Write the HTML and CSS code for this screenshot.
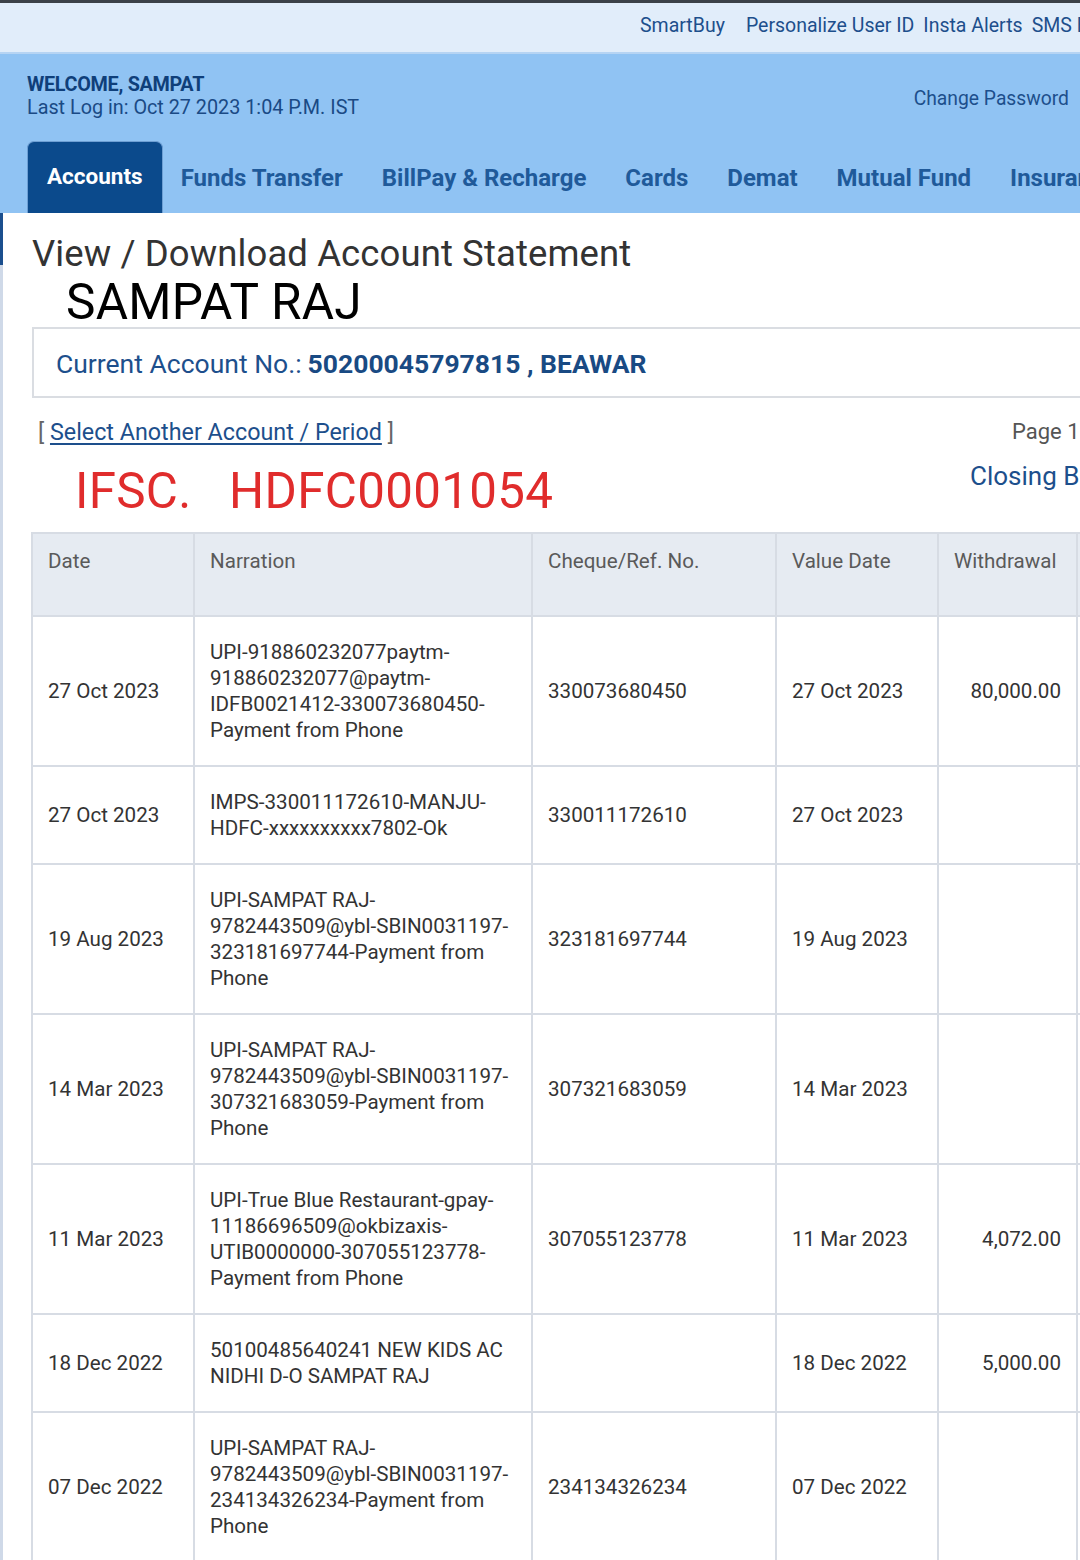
FILE: index.html
```html
<!DOCTYPE html>
<html>
<head>
<meta charset="utf-8">
<link rel="stylesheet" href="styles.css">
</head>
<body>
<div class="topstrip"></div>
<div class="utilbar">
  <a class="util">SmartBuy</a>
  <a class="util">Personalize User ID</a>
  <a class="util">Insta Alerts</a>
  <a class="util">SMS Banking</a>
</div>
<header class="header">
  <div class="welcome-row">
    <div class="welcome">
      <div class="welcome-name">WELCOME, SAMPAT</div>
      <div class="lastlog">Last Log in: Oct 27 2023 1:04 P.M. IST</div>
    </div>
    <a class="changepw">Change Password</a>
  </div>
  <nav class="tabs">
    <a class="tab active">Accounts</a>
    <a class="tab">Funds Transfer</a>
    <a class="tab">BillPay &amp; Recharge</a>
    <a class="tab">Cards</a>
    <a class="tab">Demat</a>
    <a class="tab">Mutual Fund</a>
    <a class="tab">Insurance</a>
  </nav>
</header>
<main class="content">
  <h1 class="title">View / Download Account Statement</h1>
  <div class="holder">SAMPAT RAJ</div>
  <div class="acctbox">
    <span class="acct-label">Current Account No.: </span><span class="acct-no">50200045797815 , BEAWAR</span>
  </div>
  <div class="meta-row">
    <div class="meta-left">
      <div class="select"><span class="bracket">[ </span><a class="select-link">Select Another Account / Period</a><span class="bracket"> ]</span></div>
      <div class="ifsc">IFSC.&nbsp;&nbsp;&nbsp;HDFC0001054</div>
    </div>
    <div class="meta-right">
      <div class="page">Page 1 of 1</div>
      <div class="closing">Closing Balance</div>
    </div>
  </div>
  <table class="stmt">
    <colgroup>
      <col class="c-date"><col class="c-narr"><col class="c-ref"><col class="c-vdate"><col class="c-wd"><col class="c-dep"><col class="c-bal">
    </colgroup>
    <thead>
      <tr><th>Date</th><th>Narration</th><th>Cheque/Ref. No.</th><th>Value Date</th><th>Withdrawal</th><th>Deposit</th><th>Closing Balance</th></tr>
    </thead>
    <tbody>
      <tr><td>27 Oct 2023</td><td>UPI-918860232077paytm-<br>918860232077@paytm-<br>IDFB0021412-330073680450-<br>Payment from Phone</td><td>330073680450</td><td>27 Oct 2023</td><td class="num">80,000.00</td><td class="num"></td><td class="num"></td></tr>
      <tr><td>27 Oct 2023</td><td>IMPS-330011172610-MANJU-<br>HDFC-xxxxxxxxxx7802-Ok</td><td>330011172610</td><td>27 Oct 2023</td><td class="num"></td><td class="num"></td><td class="num"></td></tr>
      <tr><td>19 Aug 2023</td><td>UPI-SAMPAT RAJ-<br>9782443509@ybl-SBIN0031197-<br>323181697744-Payment from<br>Phone</td><td>323181697744</td><td>19 Aug 2023</td><td class="num"></td><td class="num"></td><td class="num"></td></tr>
      <tr><td>14 Mar 2023</td><td>UPI-SAMPAT RAJ-<br>9782443509@ybl-SBIN0031197-<br>307321683059-Payment from<br>Phone</td><td>307321683059</td><td>14 Mar 2023</td><td class="num"></td><td class="num"></td><td class="num"></td></tr>
      <tr><td>11 Mar 2023</td><td>UPI-True Blue Restaurant-gpay-<br>11186696509@okbizaxis-<br>UTIB0000000-307055123778-<br>Payment from Phone</td><td>307055123778</td><td>11 Mar 2023</td><td class="num">4,072.00</td><td class="num"></td><td class="num"></td></tr>
      <tr><td>18 Dec 2022</td><td>50100485640241 NEW KIDS AC<br>NIDHI D-O SAMPAT RAJ</td><td></td><td>18 Dec 2022</td><td class="num">5,000.00</td><td class="num"></td><td class="num"></td></tr>
      <tr><td>07 Dec 2022</td><td>UPI-SAMPAT RAJ-<br>9782443509@ybl-SBIN0031197-<br>234134326234-Payment from<br>Phone</td><td>234134326234</td><td>07 Dec 2022</td><td class="num"></td><td class="num"></td><td class="num"></td></tr>
    </tbody>
  </table>
</main>
</body>
</html>
```

FILE: styles.css
```css
html, body {
  margin: 0;
  padding: 0;
  overflow: hidden;
  background: #ffffff;
  font-family: Roboto, "Liberation Sans", Arial, sans-serif;
}
body {
  width: 1080px;
}
a { text-decoration: none; }

.topstrip {
  height: 3px;
  background: #3b4148;
}
.utilbar {
  height: 51px;
  box-sizing: border-box;
  padding-bottom: 5px;
  background: #e1edfa;
  border-bottom: 2px solid #b6d4f3;
  display: flex;
  justify-content: flex-start;
  align-items: center;
  padding-left: 640px;
  white-space: nowrap;
  overflow: hidden;
}
.util {
  color: #1d4f8c;
  font-size: 19.5px;
  margin-right: 9px;
}
.util:first-child { margin-right: 21px; }

.header {
  background: #90c3f3;
  height: 159px;
  display: flex;
  flex-direction: column;
  justify-content: space-between;
  padding-left: 27px;
  box-sizing: border-box;
  overflow: hidden;
}
.welcome-row {
  display: flex;
  justify-content: space-between;
  align-items: center;
  padding-top: 19px;
  padding-right: 11px;
}
.welcome-name {
  color: #0f3f7a;
  font-weight: 700;
  font-size: 19.8px;
  line-height: 23px;
  letter-spacing: -0.3px;
}
.lastlog {
  color: #1a4a85;
  font-size: 19.8px;
  line-height: 23px;
}
.changepw {
  color: #1d4f8c;
  font-size: 19.3px;
  padding-top: 5px;
}
.tabs {
  display: flex;
  align-items: stretch;
  height: 72px;
  white-space: nowrap;
}
.tab {
  display: flex;
  align-items: center;
  padding-top: 2px;
  color: #1f5a9a;
  font-weight: 700;
  font-size: 24px;
  margin-right: 39px;
}
.tab.active {
  background: #0b4a8c;
  color: #ffffff;
  font-size: 22.5px;
  border-radius: 7px 7px 0 0;
  padding: 0 19px 4px;
  margin-right: 18px;
  border: 1px solid #6e9fd3;
  border-bottom: none;
}

.content {
  border-left: 3px solid #cfd9e8;
  padding-left: 29px;
  padding-top: 19px;
  position: relative;
}
.content::before {
  content: "";
  position: absolute;
  left: -3px;
  top: 0;
  width: 3px;
  height: 52px;
  background: #1b4f8e;
}
.title {
  margin: 0;
  font-weight: 400;
  font-size: 36.5px;
  line-height: 44px;
  color: #333333;
  letter-spacing: 0.1px;
}
.holder {
  margin-left: 34px;
  font-size: 49.5px;
  line-height: 52px;
  color: #000000;
  letter-spacing: 0.3px;
}
.acctbox {
  margin-top: -1px;
  border: 2px solid #dadde2;
  border-right: none;
  height: 66px;
  box-sizing: content-box;
  display: flex;
  align-items: center;
  padding-left: 22px;
  padding-top: 1px;
  font-size: 26.5px;
  white-space: nowrap;
}
.acct-label { color: #1d4f8c; }
.acct-no { color: #194a83; font-weight: 700; margin-left: 6px; }

.meta-row {
  display: flex;
  justify-content: space-between;
  padding-top: 20px;
}
.meta-left { padding-left: 6px; }
.select {
  font-size: 23.3px;
  line-height: 28px;
}
.bracket { color: #666666; }
.select-link {
  color: #1d4f8c;
  text-decoration: underline;
  text-underline-offset: 3px;
}
.ifsc {
  margin-left: 37px;
  margin-top: 14px;
  color: #e02c2c;
  font-size: 49.3px;
  line-height: 62px;
  letter-spacing: 0.3px;
}
.meta-right {
  white-space: nowrap;
  width: 68px;
  overflow: visible;
}
.page {
  color: #555555;
  font-size: 22px;
  line-height: 28px;
}
.closing {
  color: #1d4f8c;
  font-size: 26px;
  margin-top: 15px;
  margin-left: -42px;
}

.stmt {
  margin-top: 10px;
  margin-left: -1px;
  border-collapse: collapse;
  table-layout: fixed;
  width: 1300px;
  font-size: 20.6px;
  color: #333333;
}
.c-date { width: 162px; }
.c-narr { width: 338px; }
.c-ref { width: 244px; }
.c-vdate { width: 162px; }
.c-wd { width: 139px; }
.c-dep { width: 127px; }
.c-bal { width: 128px; }
.stmt th, .stmt td {
  border: 2px solid #d7dce4;
  padding: 22px 15px;
  line-height: 26px;
  text-align: left;
  vertical-align: middle;
}
.stmt th {
  background: #e6ebf2;
  color: #5a5a5a;
  font-weight: 400;
  vertical-align: top;
  padding-top: 14px;
  height: 45px;
  white-space: nowrap;
  overflow: hidden;
}
.stmt td.num { text-align: right; }
```
